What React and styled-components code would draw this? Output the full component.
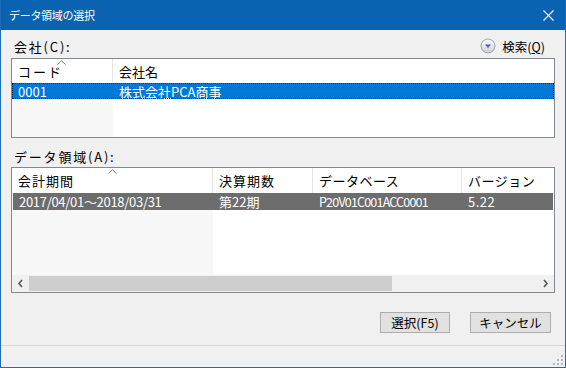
import styled, { createGlobalStyle } from 'styled-components';

const GlobalStyle = createGlobalStyle`
    html, body {
        margin: 0;
        padding: 0;
        background: #f0f0f0;
    }
    * {
        box-sizing: border-box;
    }
`;

const FONT = `"Noto Sans CJK JP", "Noto Sans", sans-serif`;

const Window = styled.div`
    width: 566px;
    height: 368px;
    display: flex;
    flex-direction: column;
    background-color: #f0f0f0;
    border: 1px solid #1e6cb3;
    border-top: none;
    font-family: ${FONT};
    color: #000;
    overflow: hidden;
`;

const TitleBar = styled.div`
    height: 30px;
    flex: none;
    margin: 0 -1px;
    background-color: #0a63b0;
    color: #fff;
    display: flex;
    align-items: center;
    justify-content: space-between;
    padding: 0 8px 0 9px;
    font-size: 11px;
    letter-spacing: -0.3px;
`;

const CloseIcon = styled.svg`
    width: 11px;
    height: 11px;
    margin-right: 4px;
`;

const Body = styled.div`
    flex: 1;
    display: flex;
    flex-direction: column;
    padding: 5px 10px 0 10px;
`;

// ラベル行 (会社 / データ領域)
const LabelRow = styled.div`
    height: 22px;
    display: flex;
    align-items: center;
    justify-content: space-between;
    padding-left: 3px;
    margin-top: ${(props) => props.top || 0}px;
    margin-bottom: ${(props) => props.gap || 0}px;
    font-size: 13px;
    letter-spacing: 1.8px;
`;

const Search = styled.div`
    display: flex;
    align-items: center;
    gap: 6px;
    padding-right: 10px;
    font-size: 12.5px;
    letter-spacing: 0;
    u {
        text-decoration: underline;
    }
`;

const ListBox = styled.div`
    height: ${(props) => props.h}px;
    background-color: #fff;
    border: 1px solid #828790;
    display: flex;
    flex-direction: column;
    position: relative;
    overflow: hidden;
`;

// ソート列の薄いグレー
const SortShade = styled.div`
    position: absolute;
    left: 0;
    top: 0;
    bottom: 0;
    width: ${(props) => props.w}px;
    background-color: #f7f7f7;
`;

const Header = styled.div`
    height: ${(props) => props.h}px;
    display: flex;
    position: relative;
    background-color: #fff;
    font-size: 13px;
    flex: none;
`;

const HeadCell = styled.div`
    width: ${(props) => props.w}px;
    flex: ${(props) => (props.w ? 'none' : '1')};
    display: flex;
    align-items: center;
    padding-left: 6px;
    position: relative;
    border-right: ${(props) => (props.sep ? '1px solid #e5e5e5' : 'none')};
    letter-spacing: ${(props) => props.ls || 0}px;
`;

const Caret = styled.svg`
    position: absolute;
    top: 1px;
    left: ${(props) => props.x}px;
    width: 9px;
    height: 5px;
`;

const Row = styled.div`
    height: ${(props) => props.h}px;
    margin: ${(props) => props.m || '0'};
    display: flex;
    position: relative;
    font-size: 13px;
    color: #fff;
    background-color: ${(props) => props.bg};
    outline: ${(props) => (props.focus ? '1px dotted #0a2a55' : 'none')};
    outline-offset: -1px;
    flex: none;
`;

const Cell = styled.div`
    width: ${(props) => props.w}px;
    flex: ${(props) => (props.w ? 'none' : '1')};
    display: flex;
    align-items: center;
    padding-left: 6px;
    white-space: nowrap;
    font-size: ${(props) => props.fs || 13}px;
    letter-spacing: ${(props) => props.ls || 0}px;
`;

const Spacer = styled.div`
    flex: 1;
`;

const HScroll = styled.div`
    height: 17px;
    display: flex;
    align-items: stretch;
    background-color: #f0f0f0;
    position: relative;
    flex: none;
`;

const ScrollArrow = styled.div`
    width: 17px;
    display: flex;
    align-items: center;
    justify-content: center;
`;

const Track = styled.div`
    flex: 1;
    display: flex;
    align-items: center;
`;

const Thumb = styled.div`
    width: ${(props) => props.w}px;
    height: 15px;
    background-color: #cdcdcd;
`;

const ButtonRow = styled.div`
    display: flex;
    justify-content: flex-end;
    gap: 20px;
    padding: 19px 4px 0 0;
    height: 52px;
`;

const Button = styled.button`
    width: ${(props) => props.w}px;
    height: 21px;
    font-family: ${FONT};
    font-size: 12.5px;
    background-color: #e1e1e1;
    border: 1px solid #adadad;
    padding: 0;
    color: #000;
`;

const StatusBar = styled.div`
    height: 22px;
    flex: none;
    border-top: 1px solid #d9d9d9;
    display: flex;
    justify-content: flex-end;
    align-items: flex-end;
    padding: 0 2px 2px 0;
`;

function SearchIcon() {
    return (
        <svg width="16" height="16" viewBox="0 0 16 16">
            <defs>
                <linearGradient id="sg" x1="0" y1="0" x2="0" y2="1">
                    <stop offset="0" stopColor="#ffffff" />
                    <stop offset="1" stopColor="#c9ccd3" />
                </linearGradient>
            </defs>
            <circle cx="8" cy="8" r="7" fill="url(#sg)" stroke="#9aa0aa" strokeWidth="1" />
            <path d="M5 6.5 L11 6.5 L8 10 Z" fill="#4a5cc8" />
        </svg>
    );
}

function SortCaret({ x }) {
    return (
        <Caret x={x} viewBox="0 0 9 5">
            <path d="M0.5 4.5 L4.5 0.8 L8.5 4.5" stroke="#777" strokeWidth="1" fill="none" />
        </Caret>
    );
}

function Grip() {
    const dots = [
        [10, 2],
        [6, 6],
        [10, 6],
        [2, 10],
        [6, 10],
        [10, 10],
    ];
    return (
        <svg width="12" height="12" viewBox="0 0 12 12">
            {dots.map(([x, y]) => (
                <rect key={`${x}-${y}`} x={x} y={y} width="2" height="2" fill="#b8b8b8" />
            ))}
        </svg>
    );
}

export default function App() {
    const thumbWidth = 363;
    return (
        <Window>
            <GlobalStyle />
            <TitleBar>
                <span>データ領域の選択</span>
                <CloseIcon viewBox="0 0 11 11">
                    <path d="M0.5 0.5 L10.5 10.5 M10.5 0.5 L0.5 10.5" stroke="#fff" strokeWidth="1.1" />
                </CloseIcon>
            </TitleBar>
            <Body>
                <LabelRow gap={1}>
                    <span>会社(C):</span>
                    <Search>
                        <SearchIcon />
                        <span>
                            検索(<u>Q</u>)
                        </span>
                    </Search>
                </LabelRow>
                <ListBox h={80}>
                    <SortShade w={101} />
                    <Header h={24}>
                        <HeadCell w={101} sep ls={2}>
                            コード
                            <SortCaret x={45} />
                        </HeadCell>
                        <HeadCell>会社名</HeadCell>
                    </Header>
                    <Row h={16} bg="#0078d7" focus>
                        <Cell w={101}>0001</Cell>
                        <Cell>株式会社PCA商事</Cell>
                    </Row>
                </ListBox>
                <LabelRow top={7}>
                    <span>データ領域(A):</span>
                </LabelRow>
                <ListBox h={126}>
                    <SortShade w={201} />
                    <Header h={25}>
                        <HeadCell w={201} sep ls={1}>
                            会計期間
                            <SortCaret x={96} />
                        </HeadCell>
                        <HeadCell w={100} sep ls={1}>
                            決算期数
                        </HeadCell>
                        <HeadCell w={149} sep ls={0.5}>
                            データベース
                        </HeadCell>
                        <HeadCell ls={0.5}>バージョン</HeadCell>
                    </Header>
                    <Row h={17} bg="#6d6d6d" m="0 1px 0 1px">
                        <Cell w={200} ls={-0.3}>
                            2017/04/01～2018/03/31
                        </Cell>
                        <Cell w={100}>第22期</Cell>
                        <Cell w={149} fs={12.5} ls={-0.8}>
                            P20V01C001ACC0001
                        </Cell>
                        <Cell ls={0.5}>5.22</Cell>
                    </Row>
                    <Spacer />
                    <HScroll>
                        <ScrollArrow>
                            <svg width="7" height="9" viewBox="0 0 7 9">
                                <path d="M5 1 L2 4.5 L5 8" stroke="#555" strokeWidth="1.6" fill="none" />
                            </svg>
                        </ScrollArrow>
                        <Track>
                            <Thumb w={thumbWidth} />
                        </Track>
                        <ScrollArrow>
                            <svg width="7" height="9" viewBox="0 0 7 9">
                                <path d="M2 1 L5 4.5 L2 8" stroke="#555" strokeWidth="1.6" fill="none" />
                            </svg>
                        </ScrollArrow>
                    </HScroll>
                </ListBox>
                <ButtonRow>
                    <Button w={70}>選択(F5)</Button>
                    <Button w={81}>キャンセル</Button>
                </ButtonRow>
            </Body>
            <StatusBar>
                <Grip />
            </StatusBar>
        </Window>
    );
}
